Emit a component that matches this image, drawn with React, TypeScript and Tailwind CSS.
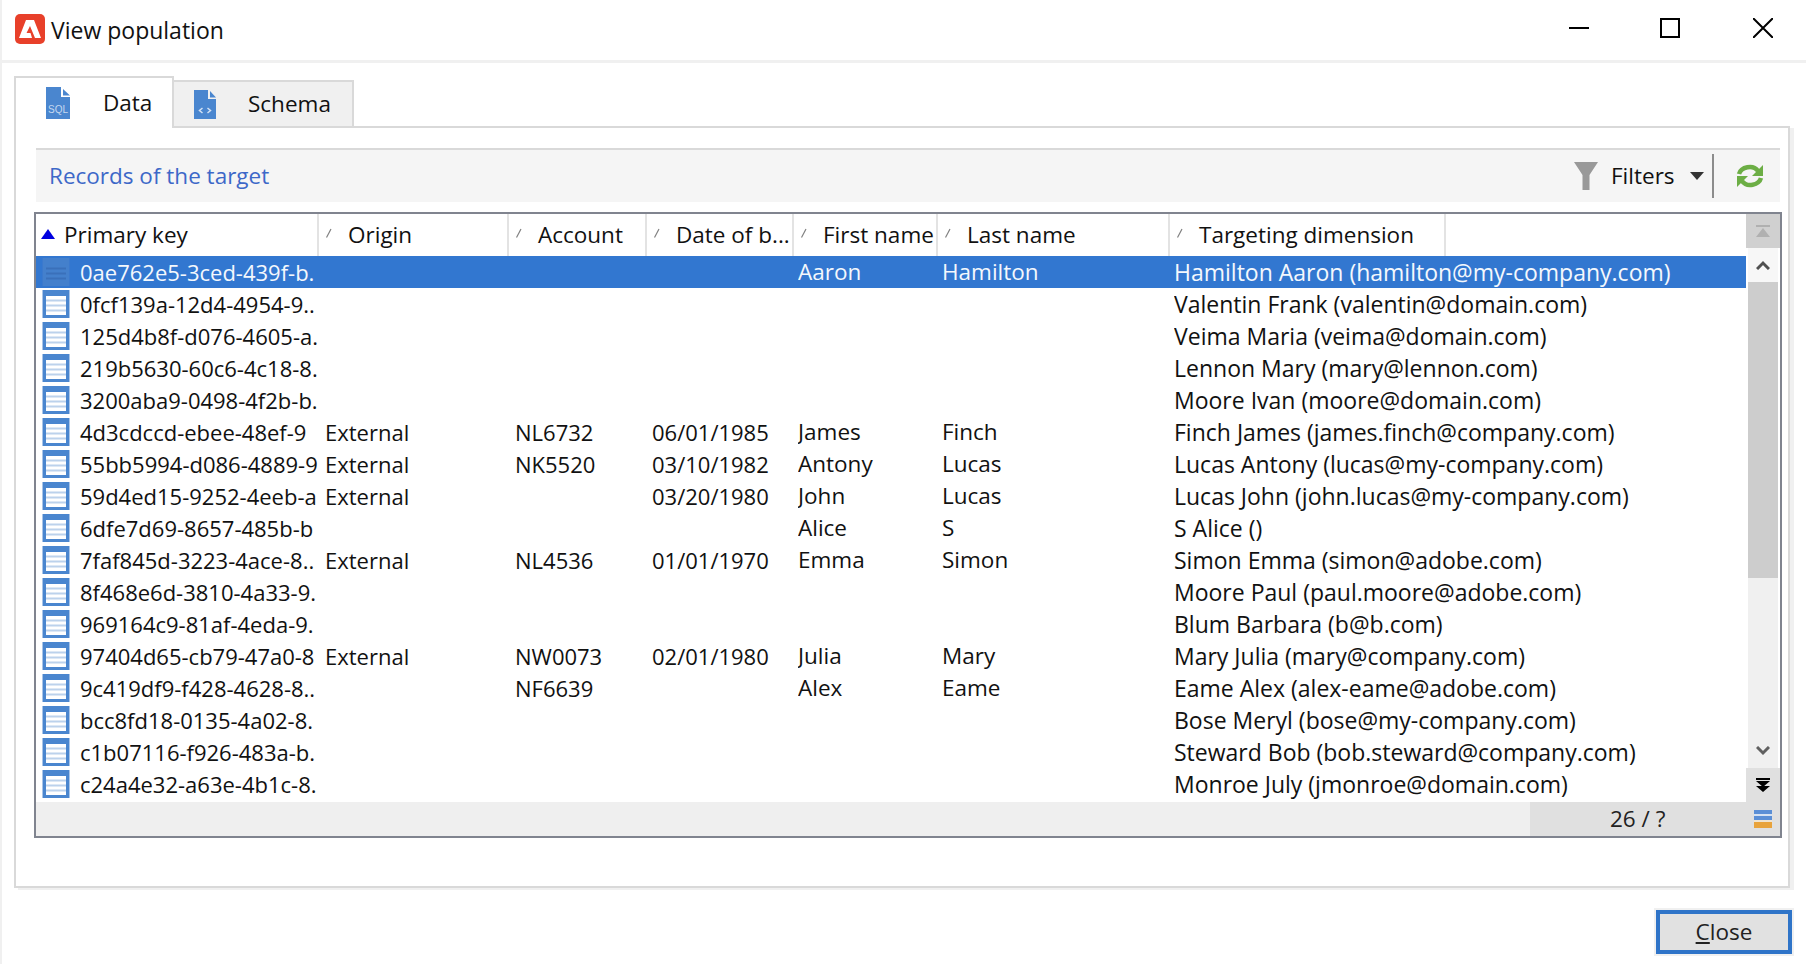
import React from 'react';

const FONT = "font-['Open_Sans','Noto_Sans',sans-serif]";

interface Row {
  key: string;
  origin?: string;
  account?: string;
  birth?: string;
  first?: string;
  last?: string;
  target: string;
}

const rows: Row[] = [
  { key: '0ae762e5-3ced-439f-b.', first: 'Aaron', last: 'Hamilton', target: 'Hamilton Aaron (hamilton@my-company.com)' },
  { key: '0fcf139a-12d4-4954-9..', target: 'Valentin Frank (valentin@domain.com)' },
  { key: '125d4b8f-d076-4605-a.', target: 'Veima Maria (veima@domain.com)' },
  { key: '219b5630-60c6-4c18-8.', target: 'Lennon Mary (mary@lennon.com)' },
  { key: '3200aba9-0498-4f2b-b.', target: 'Moore Ivan (moore@domain.com)' },
  { key: '4d3cdccd-ebee-48ef-9', origin: 'External', account: 'NL6732', birth: '06/01/1985', first: 'James', last: 'Finch', target: 'Finch James (james.finch@company.com)' },
  { key: '55bb5994-d086-4889-9', origin: 'External', account: 'NK5520', birth: '03/10/1982', first: 'Antony', last: 'Lucas', target: 'Lucas Antony (lucas@my-company.com)' },
  { key: '59d4ed15-9252-4eeb-a', origin: 'External', birth: '03/20/1980', first: 'John', last: 'Lucas', target: 'Lucas John (john.lucas@my-company.com)' },
  { key: '6dfe7d69-8657-485b-b', first: 'Alice', last: 'S', target: 'S Alice ()' },
  { key: '7faf845d-3223-4ace-8..', origin: 'External', account: 'NL4536', birth: '01/01/1970', first: 'Emma', last: 'Simon', target: 'Simon Emma (simon@adobe.com)' },
  { key: '8f468e6d-3810-4a33-9.', target: 'Moore Paul (paul.moore@adobe.com)' },
  { key: '969164c9-81af-4eda-9.', target: 'Blum Barbara (b@b.com)' },
  { key: '97404d65-cb79-47a0-8', origin: 'External', account: 'NW0073', birth: '02/01/1980', first: 'Julia', last: 'Mary', target: 'Mary Julia (mary@company.com)' },
  { key: '9c419df9-f428-4628-8..', account: 'NF6639', first: 'Alex', last: 'Eame', target: 'Eame Alex (alex-eame@adobe.com)' },
  { key: 'bcc8fd18-0135-4a02-8.', target: 'Bose Meryl (bose@my-company.com)' },
  { key: 'c1b07116-f926-483a-b.', target: 'Steward Bob (bob.steward@company.com)' },
  { key: 'c24a4e32-a63e-4b1c-8.', target: 'Monroe July (jmonroe@domain.com)' },
];

const SqlIcon = () => (
  <svg width="24" height="32" viewBox="0 0 24 32" className="shrink-0">
    <path d="M0 0h15v10h9v22H0z" fill="#4a86cf" />
    <path d="M17 2l7 6.500h-7z" fill="#4a86cf" />
    <text x="12" y="26" textAnchor="middle" fontSize="10" fontFamily="Liberation Sans, sans-serif" fill="#c4d8f0">SQL</text>
  </svg>
);

const CodeIcon = () => (
  <svg width="22" height="29" viewBox="0 0 22 29" className="shrink-0">
    <path d="M0 0h14v9h8v20H0z" fill="#4a86cf" />
    <path d="M16 1l6 6.500h-6z" fill="#4a86cf" />
    <path d="M8.500 18l-3 2.500 3 2.500M13.500 18l3 2.500-3 2.500" stroke="#d4e2f4" strokeWidth="1.500" fill="none" />
  </svg>
);

const RowIcon = ({ selected }: { selected: boolean }) => (
  <svg width="28" height="28" viewBox="0 0 28 28" className="shrink-0">
    <rect width="28" height="28" fill={selected ? '#3b79cd' : '#a9c5e8'} />
    <rect x="1" width="26" height="28" fill={selected ? '#4480cc' : '#4a86cf'} />
    <rect x="4" y="6" width="20" height="19" fill={selected ? '#4480cc' : '#ffffff'} />
    <path d="M4 10.500h20M4 15.500h20M4 20.500h20" stroke={selected ? '#3a70ba' : '#bcd2ec'} strokeWidth="2" />
  </svg>
);

const headers = [
  { label: 'Origin', w: 'w-[190px]' },
  { label: 'Account', w: 'w-[138px]' },
  { label: 'Date of b...', w: 'w-[147px]' },
  { label: 'First name', w: 'w-[144px]' },
  { label: 'Last name', w: 'w-[232px]' },
  { label: 'Targeting dimension', w: 'w-[276px]' },
];

const HeaderCell = ({ label, w }: { label: string; w: string }) => (
  <div className={`${w} h-full shrink-0 flex items-center pl-[6px] border-r-2 border-[#e3e3e3] overflow-hidden whitespace-nowrap`}>
    <svg width="8" height="12" viewBox="0 0 8 12" className="shrink-0 mb-[4px]">
      <path d="M1.500 10.500L6 2" stroke="#808080" strokeWidth="1.200" />
    </svg>
    <span className="ml-[15px]">{label}</span>
  </div>
);

const Cell = ({ w, children }: { w: string; children?: React.ReactNode }) => (
  <div className={`${w} shrink-0 overflow-hidden whitespace-nowrap`}>{children}</div>
);

const DataRow = ({ row, selected }: { row: Row; selected: boolean }) => (
  <div className={`h-[32px] flex items-center ${selected ? 'bg-[#3277d0] text-[#f4f8fd]' : 'text-[#111111]'}`}>
    <div className="w-[283px] shrink-0 flex items-center pl-[6px] overflow-hidden whitespace-nowrap">
      <RowIcon selected={selected} />
      <span className="ml-[10px] text-[22px]">{row.key}</span>
    </div>
    <div className="pl-[6px] flex items-center">
      <Cell w="w-[190px] text-[22px]">{row.origin}</Cell>
      <Cell w="w-[137px] text-[22px]">{row.account}</Cell>
      <Cell w="w-[146px] text-[22px]">{row.birth}</Cell>
      <Cell w="w-[144px]">{row.first}</Cell>
      <Cell w="w-[232px]">{row.last}</Cell>
      <div className="w-[560px] shrink-0 overflow-hidden whitespace-nowrap text-[23px]">{row.target}</div>
    </div>
  </div>
);

export default function App() {
  return (
    <div className={`w-[1806px] h-[964px] bg-white overflow-hidden flex flex-col border-l-2 border-[#f0f0f0] text-[22.5px] text-[#111111] ${FONT}`}>
      {/* barre de titre */}
      <div className="h-[60px] shrink-0 flex items-center justify-between pl-[13px] pr-[33px]">
        <div className="flex items-center">
          <svg width="30" height="30" viewBox="0 0 30 30" className="-mt-[3px]">
            <rect width="30" height="30" rx="5" fill="#e8402a" />
            <path d="M11 6H19L26 24H20L15 12L11.500 19H15.500L17 24H4Z" fill="#ffffff" />
          </svg>
          <span className="ml-[6px] text-[23px]">View population</span>
        </div>
        <div className="flex items-center mb-[4px]">
          <svg width="20" height="20" viewBox="0 0 20 20"><path d="M0 10h20" stroke="#000" strokeWidth="2" /></svg>
          <svg width="20" height="20" viewBox="0 0 20 20" className="ml-[71px]"><rect x="1" y="1" width="18" height="18" fill="none" stroke="#000" strokeWidth="2" /></svg>
          <svg width="20" height="20" viewBox="0 0 20 20" className="ml-[73px]"><path d="M0 0l20 20M20 0L0 20" stroke="#000" strokeWidth="2" /></svg>
        </div>
      </div>
      <div className="h-[3px] shrink-0 bg-[#f0f0f0]" />

      <div className="flex-1 flex flex-col pl-[12px] pr-[12px] pt-[13px]">
        {/* onglets */}
        <div className="h-[52px] shrink-0 flex items-end relative z-10">
          <div className="w-[160px] h-[52px] flex items-center pl-[30px] bg-white border-2 border-b-0 border-[#d9d9d9]">
            <SqlIcon />
            <span className="ml-[33px]">Data</span>
          </div>
          <div className="w-[180px] h-[48px] flex items-center pl-[20px] bg-[#f0f0f0] border-2 border-l-0 border-[#d9d9d9]">
            <CodeIcon />
            <span className="ml-[32px]">Schema</span>
          </div>
        </div>

        <div className="w-[1776px] h-[762px] -mt-[2px] border-2 border-[#d9d9d9] shadow-[4px_2px_0_#f0f0f0] pl-[20px] pt-[20px]">
          {/* barre d'outils */}
          <div className="h-[54px] w-[1744px] border-t-2 border-[#d9d9d9] bg-[#f5f5f5] flex items-center justify-between pl-[13px]">
            <span className="text-[#3d68c8]">Records of the target</span>
            <div className="flex items-center">
              <svg width="24" height="28" viewBox="0 0 24 28"><path d="M0 0h24l-8.500 13v15h-7V13z" fill="#999999" /></svg>
              <span className="ml-[13px] w-[79px]">Filters</span>
              <svg width="14" height="8" viewBox="0 0 14 8"><path d="M0 0h14L7 8z" fill="#333333" /></svg>
              <div className="w-[2px] h-[44px] ml-[8px] bg-[#8c8c8c]" />
              <svg width="28" height="28" viewBox="0 0 28 28" className="ml-[22px] mr-[16px]" fill="none">
                <path d="M3 12C5 5 17 2 22 9" stroke="#6cae45" strokeWidth="4.500" />
                <path d="M27 3v11H16z" fill="#6cae45" />
                <path d="M25 16C23 23 11 26 6 19" stroke="#6cae45" strokeWidth="4.500" />
                <path d="M1 25V14h11z" fill="#6cae45" />
              </svg>
            </div>
          </div>

          {/* liste */}
          <div className="mt-[10px] -ml-[2px] w-[1748px] h-[626px] border-2 border-[#80848f] flex flex-col">
            <div className="flex-1 flex min-h-0">
              <div className="flex-1 min-w-0">
                <div className="h-[42px] flex items-center">
                  <div className="w-[283px] h-full shrink-0 flex items-center pl-[5px] border-r-2 border-[#e3e3e3]">
                    <svg width="14" height="10" viewBox="0 0 14 10" className="shrink-0 mb-[2px]"><path d="M7 0l7 10H0z" fill="#0000e0" /></svg>
                    <span className="ml-[9px]">Primary key</span>
                  </div>
                  {headers.map((h) => (
                    <HeaderCell key={h.label} label={h.label} w={h.w} />
                  ))}
                </div>
                {rows.map((r, i) => (
                  <DataRow key={r.key} row={r} selected={i === 0} />
                ))}
              </div>

              {/* ascenseur */}
              <div className="w-[34px] shrink-0 flex flex-col items-center bg-white">
                <div className="w-full h-[34px] bg-[#d0d0d0] flex items-center justify-center">
                  <svg width="14" height="12" viewBox="0 0 14 12"><path d="M0 0h14v2H0zM7 3l7 9H0z" fill="#b0b0b0" /></svg>
                </div>
                <div className="w-[30px] flex-1 flex flex-col items-center bg-[#f0f0f0]">
                  <div className="w-full h-[34px] bg-[#f7f7f7] flex items-center justify-center">
                    <svg width="14" height="10" viewBox="0 0 14 10" fill="none" stroke="#505050" strokeWidth="3"><path d="M1 9l6-6 6 6" /></svg>
                  </div>
                  <div className="w-full h-[296px] bg-[#cdcdcd]" />
                  <div className="flex-1" />
                  <div className="h-[34px] flex items-center justify-center">
                    <svg width="14" height="10" viewBox="0 0 14 10" fill="none" stroke="#606060" strokeWidth="3"><path d="M1 1l6 6 6-6" /></svg>
                  </div>
                </div>
                <div className="w-full h-[34px] bg-[#e0e0e0] flex items-center justify-center">
                  <svg width="14" height="14" viewBox="0 0 14 14"><path d="M0 0h14v2H0zM0 3h14L7 9zM0 8h14l-7 6z" fill="#000000" /></svg>
                </div>
              </div>
            </div>

            {/* bas de liste */}
            <div className="h-[34px] shrink-0 flex bg-[#efefef]">
              <div className="flex-1" />
              <div className="w-[250px] bg-[#e0e0e0] flex items-center">
                <span className="ml-[80px] text-[#222222]">26 / ?</span>
                <div className="ml-auto mr-[8px] flex flex-col w-[18px] h-[18px]">
                  <div className="h-[4px] bg-[#5b8fd6]" />
                  <div className="h-[2px] bg-[#d6e2f2]" />
                  <div className="h-[4px] bg-[#5b8fd6]" />
                  <div className="h-[2px] bg-[#f0e4d0]" />
                  <div className="h-[6px] bg-[#e8a33c]" />
                </div>
              </div>
            </div>
          </div>
        </div>

        {/* pied */}
        <div className="flex justify-end pr-[2px] pt-[22px]">
          <button className="w-[136px] h-[44px] border-4 border-[#2f74c8] bg-[#e1e1e1] outline-2 outline-[#f0f0f0] text-[#222222]">
            <span className="underline underline-offset-2">C</span>lose
          </button>
        </div>
      </div>
    </div>
  );
}
